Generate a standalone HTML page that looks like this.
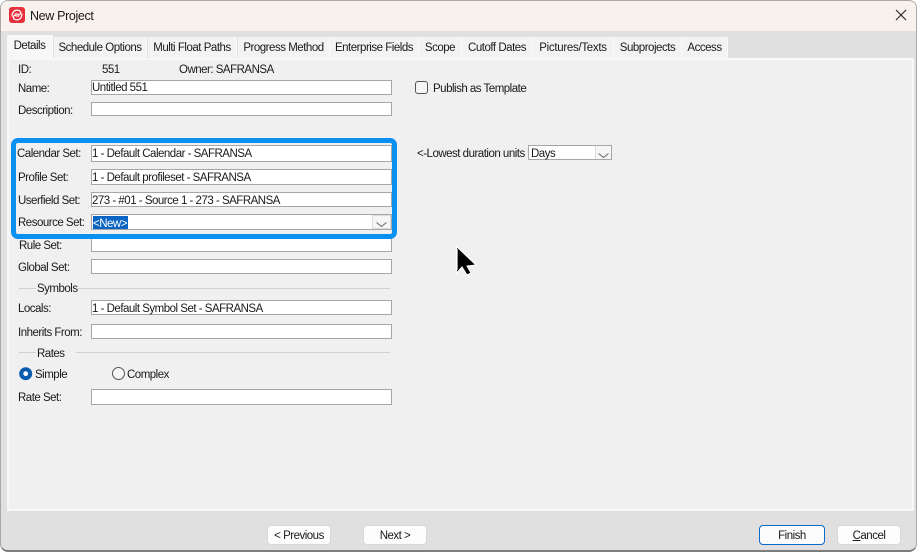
<!DOCTYPE html>
<html><head><meta charset="utf-8"><title>New Project</title>
<style>
html,body{margin:0;padding:0;width:917px;height:553px;overflow:hidden;background:#fff;font-family:"Liberation Sans",sans-serif;font-size:11.5px;color:#111;}
*{box-sizing:border-box}
.a{position:absolute}
.t{position:absolute;white-space:nowrap;line-height:16px;margin-top:1px;letter-spacing:-.5px;color:#1a1a1a}
.tab{position:absolute;top:37px;height:21px;background:#f3f3f3;border-right:1px solid #fafafa;text-align:center;line-height:22px;white-space:nowrap;letter-spacing:-.48px;color:#1a1a1a}
.i{position:absolute;left:91px;width:301px;background:#fff;border:1px solid #a6a6a6;line-height:15px;padding-left:0;white-space:nowrap;letter-spacing:-.5px;color:#1a1a1a}
.b{position:absolute;top:525px;height:20px;background:#fdfdfd;border:1px solid #d8d8d8;border-radius:4px;text-align:center;line-height:20px;letter-spacing:-.5px;color:#1a1a1a}
.l{position:absolute;height:1px;background:#d0d0d0}
</style></head><body>
<div class="a" style="left:0;top:0;width:917px;height:553px;background:#fff"></div>
<div class="a" style="left:0;top:0;width:917px;height:552px;border:1px solid #a8a8a8;border-bottom:2px solid #7d7d7d;border-radius:8px;background:#e0e0e0;overflow:hidden">
  <div class="a" style="left:0;top:0;width:915px;height:30px;background:#f9f1ec"></div>
</div>
<svg class="a" style="left:9px;top:7px" width="16" height="16" viewBox="0 0 16 16"><rect width="16" height="16" rx="3" fill="#e8303c"/><path d="M3.200 9C2.800 5.500 5.500 2.800 8.800 3.200C11.500 3.600 12.500 6 11 7.200C9.500 8.200 7.800 6.200 6 7.200M12.800 7C13.200 10.500 10.500 13.200 7.200 12.800C4.500 12.400 3.500 10 5 8.800C6.500 7.800 8.200 9.800 10 8.800" fill="none" stroke="#fff" stroke-width="1.200" stroke-linecap="round"/></svg>
<div class="t" style="left:30px;top:7px;font-size:12.500px;letter-spacing:-.35px">New Project</div>
<svg class="a" style="left:895px;top:9px" width="12" height="12" viewBox="0 0 12 12"><path d="M1 1L11 11M11 1L1 11" stroke="#222" stroke-width="1.100" fill="none"/></svg>

<div class="a" style="left:7px;top:58px;width:907px;height:453px;background:#f0f0f0;border:2px solid #f8f8f8"></div>
<div class="tab" style="left:7px;top:35px;width:46px;height:24px;background:#f7f7f7;line-height:22px">Details</div>
<div class="tab" style="left:54px;width:93px">Schedule Options</div>
<div class="tab" style="left:148px;width:89px">Multi Float Paths</div>
<div class="tab" style="left:238px;width:92px">Progress Method</div>
<div class="tab" style="left:330px;width:89px">Enterprise Fields</div>
<div class="tab" style="left:419px;width:43px">Scope</div>
<div class="tab" style="left:462px;width:71px">Cutoff Dates</div>
<div class="tab" style="left:533px;width:81px;letter-spacing:-.3px">Pictures/Texts</div>
<div class="tab" style="left:614px;width:68px">Subprojects</div>
<div class="tab" style="left:682px;width:46px">Access</div>

<div class="t" style="left:18px;top:61px">ID:</div>
<div class="t" style="left:102px;top:61px">551</div>
<div class="t" style="left:179px;top:61px">Owner: SAFRANSA</div>
<div class="t" style="left:18px;top:80px">Name:</div>
<div class="i" style="top:80px;height:15px">Untitled 551</div>
<div class="t" style="left:18px;top:102px">Description:</div>
<div class="i" style="top:102px;height:14px"></div>

<div class="a" style="left:415px;top:81px;width:13px;height:13px;border:1px solid #555;border-radius:3px;background:#f6f6f6"></div>
<div class="t" style="left:433px;top:80px">Publish as Template</div>

<div class="i" style="top:238px;height:14px"></div>
<div class="a" style="left:11px;top:138px;width:386px;height:101px;border:5px solid #0a90f0;border-radius:7px;background:#f0f0f0"></div>
<div class="t" style="left:17px;top:145px">Calendar Set:</div>
<div class="i" style="top:145px;height:17px;line-height:16px">1 - Default Calendar - SAFRANSA</div>
<div class="t" style="left:18px;top:169px">Profile Set:</div>
<div class="i" style="top:169px;height:16px;line-height:17px">1 - Default profileset - SAFRANSA</div>
<div class="t" style="left:18px;top:192px">Userfield Set:</div>
<div class="i" style="top:192px;height:15px;line-height:17px">273 - #01 - Source 1 - 273 - SAFRANSA</div>
<div class="t" style="left:18px;top:214px">Resource Set:</div>
<div class="i" style="top:214px;height:16px"></div>
<div class="a" style="left:93px;top:216px;width:35px;height:13px;background:#0a64c4;color:#fff;line-height:17px;letter-spacing:-.5px;white-space:nowrap;overflow:hidden">&lt;New&gt;</div>
<div class="a" style="left:372px;top:215px;width:19px;height:14px;background:#f6f6f6;border:1px solid #dcdcdc"></div>
<svg class="a" style="left:376px;top:222px" width="11" height="5"><path d="M.5 .5L5.500 4.500L10.500 .5" fill="none" stroke="#666"/></svg>

<div class="t" style="left:19px;top:237px">Rule Set:</div>
<div class="t" style="left:18px;top:259px">Global Set:</div>
<div class="i" style="top:259px;height:15px"></div>

<div class="l" style="left:19px;top:288px;width:17px"></div>
<div class="t" style="left:37px;top:280px">Symbols</div>
<div class="l" style="left:76px;top:288px;width:314px"></div>
<div class="t" style="left:18px;top:300px">Locals:</div>
<div class="i" style="top:300px;height:15px;line-height:17px">1 - Default Symbol Set - SAFRANSA</div>
<div class="t" style="left:18px;top:324px">Inherits From:</div>
<div class="i" style="top:324px;height:15px"></div>

<div class="l" style="left:19px;top:352px;width:17px"></div>
<div class="t" style="left:37px;top:345px">Rates</div>
<div class="l" style="left:76px;top:352px;width:314px"></div>
<svg class="a" style="left:19px;top:367px" width="14" height="14"><circle cx="6.700" cy="6.700" r="6.500" fill="#0a5cb0"/><circle cx="6.700" cy="6.700" r="2.400" fill="#fff"/></svg>
<div class="t" style="left:35px;top:366px">Simple</div>
<div class="a" style="left:112px;top:367px;width:13px;height:13px;border-radius:50%;border:1px solid #555;background:#f6f6f6"></div>
<div class="t" style="left:127px;top:366px">Complex</div>
<div class="t" style="left:18px;top:389px">Rate Set:</div>
<div class="i" style="top:389px;height:16px"></div>

<div class="t" style="left:417px;top:145px">&lt;-Lowest duration units</div>
<div class="a" style="left:528px;top:145px;width:84px;height:15px;background:#fff;border:1px solid #a6a6a6;padding-left:2px;line-height:17px;letter-spacing:-.5px;color:#1a1a1a;white-space:nowrap">Days</div>
<div class="a" style="left:595px;top:146px;width:16px;height:13px;background:#f6f6f6;border-left:1px solid #dcdcdc"></div>
<svg class="a" style="left:598px;top:153px" width="11" height="5"><path d="M.5 .5L5.500 4.500L10.500 .5" fill="none" stroke="#666"/></svg>

<svg class="a" style="left:455px;top:246px" width="24" height="31" viewBox="0 0 24 31"><path d="M1.500 .5L1.500 27L7 21L12 29L16 27L12 20L21 19Z" fill="#000" stroke="#fff" stroke-width="1"/><path d="M2.500 3L2.500 24" stroke="#999" stroke-width="1"/></svg>

<div class="b" style="left:267px;width:64px">&lt; Previous</div>
<div class="b" style="left:363px;width:64px">Next &gt;</div>
<div class="b" style="left:759px;width:66px;border-color:#0a6cc8;background:#fbfbfb">Finish</div>
<div class="b" style="left:837px;width:64px"><u>C</u>ancel</div>
</body></html>
